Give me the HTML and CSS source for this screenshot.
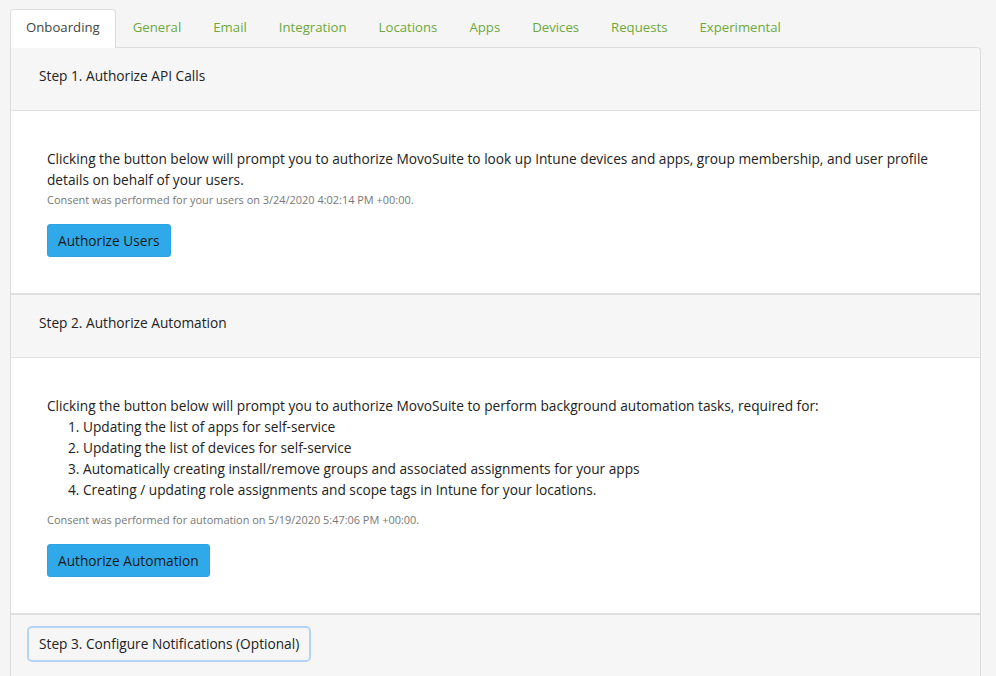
FILE: index.html
```html
<!DOCTYPE html>
<html lang="en">
<head>
<meta charset="utf-8">
<title>Onboarding</title>
<link rel="stylesheet" href="styles.css">
</head>
<body>
<div class="page">
  <ul class="tabs">
    <li class="tab active">Onboarding</li>
    <li class="tab">General</li>
    <li class="tab">Email</li>
    <li class="tab">Integration</li>
    <li class="tab">Locations</li>
    <li class="tab">Apps</li>
    <li class="tab">Devices</li>
    <li class="tab">Requests</li>
    <li class="tab">Experimental</li>
  </ul>
  <div class="panel">
    <section class="step">
      <div class="step-header"><button class="step-toggle">Step 1. Authorize API Calls</button></div>
      <div class="step-body">
        <p class="lead">Clicking the button below will prompt you to authorize MovoSuite to look up Intune devices and apps, group membership, and user profile details on behalf of your users.</p>
        <small class="consent">Consent was performed for your users on 3/24/2020 4:02:14 PM +00:00.</small>
        <button class="btn-primary">Authorize Users</button>
      </div>
    </section>
    <section class="step">
      <div class="step-header"><button class="step-toggle">Step 2. Authorize Automation</button></div>
      <div class="step-body">
        <p class="lead">Clicking the button below will prompt you to authorize MovoSuite to perform background automation tasks, required for:</p>
        <ol class="tasks">
          <li>Updating the list of apps for self-service</li>
          <li>Updating the list of devices for self-service</li>
          <li>Automatically creating install/remove groups and associated assignments for your apps</li>
          <li>Creating / updating role assignments and scope tags in Intune for your locations.</li>
        </ol>
        <small class="consent">Consent was performed for automation on 5/19/2020 5:47:06 PM +00:00.</small>
        <button class="btn-primary">Authorize Automation</button>
      </div>
    </section>
    <section class="step">
      <div class="step-header"><button class="step-toggle focused">Step 3. Configure Notifications (Optional)</button></div>
    </section>
  </div>
</div>
</body>
</html>
```

FILE: styles.css
```css
html, body {
  margin: 0;
  padding: 0;
  background: #f5f5f5;
}
body {
  font-family: "Open Sans", "Noto Sans", sans-serif;
  font-size: 13.7px;
  color: #222;
  overflow: hidden;
}
.page {
  padding: 9px 15px 0 10px;
}
.tabs {
  list-style: none;
  margin: 0;
  padding: 0;
  display: flex;
  font-size: 13.2px;
}
.tab {
  border: 1px solid transparent;
  border-bottom: none;
  border-radius: 4px 4px 0 0;
  padding: 0 14px;
  margin-right: 2px;
  height: 37px;
  line-height: 35px;
  color: #6ca93a;
  white-space: nowrap;
}
.tab.active {
  background: #fff;
  border-color: #ddd;
  color: #444;
  height: 38px;
  margin-bottom: -1px;
  position: relative;
  z-index: 1;
  padding: 0 15px;
}
.panel {
  border: 1px solid #ddd;
  border-bottom: none;
  border-radius: 0 4px 0 0;
  background: #f6f6f6;
}
.step-header {
  padding: 10px 16px 16px;
  border-bottom: 1px solid #e2e2e2;
}
.step:last-child .step-header {
  border-bottom: none;
  padding-top: 11px;
  padding-bottom: 20px;
}
.step-toggle {
  font: inherit;
  color: #222;
  background: transparent;
  border: 2px solid transparent;
  border-radius: 5px;
  padding: 0 10px;
  height: 36px;
  line-height: 32px;
  cursor: pointer;
}
.step-toggle.focused {
  border-color: #b5d4f5;
}
.step-body {
  background: #fff;
  padding: 37px 36px 36px;
  border-bottom: 2px solid #dedede;
}
.lead {
  margin: 0;
  line-height: 21px;
}
.tasks {
  margin: 0 0 10px;
  padding-left: 36px;
  line-height: 21px;
}
.consent {
  display: block;
  font-size: 10.95px;
  line-height: 20px;
  color: #777;
}
.btn-primary {
  display: block;
  margin-top: 14px;
  font: inherit;
  color: #1a1a1a;
  background: #30a9ea;
  border: 1px solid #2ca3e3;
  border-radius: 3px;
  height: 33px;
  padding: 0 10px;
  cursor: pointer;
}
```
